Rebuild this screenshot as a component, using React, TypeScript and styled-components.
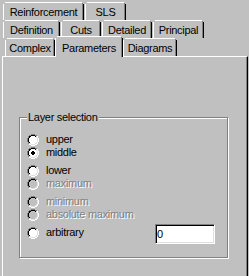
import React from 'react';
import styled, { createGlobalStyle } from 'styled-components';

const GlobalStyle = createGlobalStyle`
  html, body { margin: 0; padding: 0; background: #c0c0c0; }
  body { font-family: "Liberation Sans", Arial, sans-serif; font-size: 11px; }
`;

const Window = styled.div`
  box-sizing: border-box;
  width: 249px;
  height: 276px;
  overflow: hidden;
  background: #c0c0c0;
  padding: 2px 1px 0 2px;
  font-family: "Liberation Sans", Arial, sans-serif;
  font-size: 11px;
  letter-spacing: -0.3px;
  color: #000;
`;

const TabRow = styled.div<{ $indent: number }>`
  display: flex;
  align-items: flex-start;
  gap: 1px;
  height: 18px;
  padding-left: ${p => p.$indent}px;
`;

const Tab = styled.div<{ $w: number; $selected?: boolean }>`
  box-sizing: border-box;
  flex: none;
  width: ${p => p.$w}px;
  height: ${p => (p.$selected ? 21 : 18)}px;
  margin: ${p => (p.$selected ? '-2px -1px 0 -1px' : '0')};
  padding-top: ${p => (p.$selected ? 5 : 3)}px;
  line-height: 13px;
  text-align: center;
  white-space: nowrap;
  background: #c0c0c0;
  border-top: 1px solid #fff;
  border-left: 1px solid #fff;
  border-right: 1px solid #000;
  box-shadow: inset -1px 0 0 #808080;
  clip-path: polygon(0 2px, 1px 2px, 1px 1px, 2px 1px, 2px 0, calc(100% - 2px) 0, calc(100% - 2px) 1px, calc(100% - 1px) 1px, calc(100% - 1px) 2px, 100% 2px, 100% 100%, 0 100%);
  ${p => (p.$selected ? 'position: relative; z-index: 1;' : '')}
`;

const Panel = styled.div`
  box-sizing: border-box;
  width: 246px;
  height: 240px;
  border-top: 1px solid #fff;
  border-left: 1px solid #fff;
  border-right: 1px solid #000;
  box-shadow: inset -1px 0 0 #808080;
  padding: 54px 0 0 16px;
`;

const GroupBox = styled.fieldset`
  box-sizing: border-box;
  width: 209px;
  height: 147px;
  margin: 0;
  padding: 9px 7px 0 7px;
  border: 1px solid #808080;
  box-shadow: inset 1px 1px 0 #fff, 1px 1px 0 #fff;
  min-inline-size: 0;
`;

const Legend = styled.legend`
  padding: 0 1px;
  line-height: 13px;
  background: #c0c0c0;
`;

const RadioList = styled.div`
  display: flex;
  flex-direction: column;
`;

const RadioGroup = styled.div`
  display: flex;
  flex-direction: column;
  & + & { margin-top: 5px; }
`;

const RadioRow = styled.div`
  display: flex;
  align-items: flex-start;
  gap: 7px;
  height: 13px;
  line-height: 13px;
`;

const RadioIcon = styled.svg`
  display: block;
  flex: none;
  margin-top: 1px;
  shape-rendering: crispEdges;
`;

const Label = styled.span<{ $disabled?: boolean }>`
  white-space: nowrap;
  color: ${p => (p.$disabled ? '#808080' : '#000')};
  text-shadow: ${p => (p.$disabled ? '1px 1px 0 #fff' : 'none')};
`;

const ValueInput = styled.input`
  box-sizing: border-box;
  flex: none;
  width: 60px;
  height: 20px;
  margin: -2px 5px 0 auto;
  padding: 1px 1px;
  border: 1px solid;
  border-color: #808080 #fff #fff #808080;
  box-shadow: inset 1px 1px 0 #000, inset -1px -1px 0 #dfdfdf;
  background: #fff;
  font-family: "Liberation Sans", Arial, sans-serif;
  font-size: 11px;
  line-height: 13px;
  color: #000;
  outline: none;
`;

const MAP = [
  '....oooo....',
  '..ooiiiioo..',
  '.oiiffffiio.',
  '.oiffffffio.',
  'oiffffffffio',
  'oiffffffffio',
  'oiffffffffio',
  'oiffffffffio',
  '.oiffffffio.',
  '.oiiffffiio.',
  '..ooiiiioo..',
  '....oooo....',
];
const DOT: [number, number][] = [
  [5, 4], [6, 4], [4, 5], [5, 5], [6, 5], [7, 5], [4, 6], [5, 6], [6, 6], [7, 6], [5, 7], [6, 7],
];

const PATHS = (() => {
  const p = { dark: '', light: '', black: '', faint: '', fill: '', dot: '' };
  MAP.forEach((row, y) =>
    [...row].forEach((c, x) => {
      const px = `M${x} ${y}h1v1h-1z`;
      const tl = x + y < 11;
      if (c === 'o') p[tl ? 'dark' : 'light'] += px;
      else if (c === 'i') p[tl ? 'black' : 'faint'] += px;
      else if (c === 'f') p.fill += px;
    })
  );
  DOT.forEach(([x, y]) => (p.dot += `M${x} ${y}h1v1h-1z`));
  return p;
})();

function Radio({ checked, disabled }: { checked?: boolean; disabled?: boolean }) {
  return (
    <RadioIcon width="12" height="12" viewBox="0 0 12 12">
      <path d={PATHS.dark} fill="#808080" />
      <path d={PATHS.light} fill="#fff" />
      <path d={PATHS.black} fill="#000" />
      <path d={PATHS.faint} fill="#dfdfdf" />
      <path d={PATHS.fill} fill={disabled ? '#c0c0c0' : '#fff'} />
      {checked && <path d={PATHS.dot} fill={disabled ? '#808080' : '#000'} />}
    </RadioIcon>
  );
}

type Opt = { label: string; checked?: boolean; disabled?: boolean; input?: boolean };
const GROUPS: Opt[][] = [
  [{ label: 'upper' }, { label: 'middle', checked: true }],
  [{ label: 'lower' }, { label: 'maximum', disabled: true }],
  [{ label: 'minimum', disabled: true }, { label: 'absolute maximum', disabled: true }],
  [{ label: 'arbitrary', input: true }],
];

const ROWS: { indent: number; tabs: { label: string; w: number; selected?: boolean }[] }[] = [
  { indent: 1, tabs: [{ label: 'Reinforcement', w: 81 }, { label: 'SLS', w: 41 }] },
  {
    indent: 1,
    tabs: [
      { label: 'Definition', w: 57 },
      { label: 'Cuts', w: 40 },
      { label: 'Detailed', w: 50 },
      { label: 'Principal', w: 51 },
    ],
  },
  {
    indent: 3,
    tabs: [
      { label: 'Complex', w: 50 },
      { label: 'Parameters', w: 68, selected: true },
      { label: 'Diagrams', w: 54 },
    ],
  },
];

export default function App() {
  return (
    <>
      <GlobalStyle />
      <Window>
        {ROWS.map((row, i) => (
          <TabRow key={i} $indent={row.indent}>
            {row.tabs.map(t => (
              <Tab key={t.label} $w={t.w} $selected={t.selected}>
                {t.label}
              </Tab>
            ))}
          </TabRow>
        ))}
        <Panel>
          <GroupBox>
            <Legend>Layer selection</Legend>
            <RadioList>
              {GROUPS.map((g, gi) => (
                <RadioGroup key={gi}>
                  {g.map(o => (
                    <RadioRow key={o.label}>
                      <Radio checked={o.checked} disabled={o.disabled} />
                      <Label $disabled={o.disabled}>{o.label}</Label>
                      {o.input && <ValueInput defaultValue="0" />}
                    </RadioRow>
                  ))}
                </RadioGroup>
              ))}
            </RadioList>
          </GroupBox>
        </Panel>
      </Window>
    </>
  );
}
